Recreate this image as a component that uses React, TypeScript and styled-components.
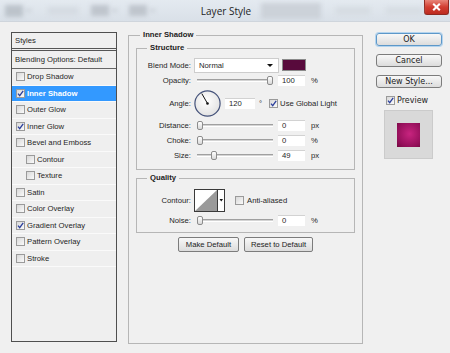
import styled, { createGlobalStyle } from 'styled-components'

const GlobalStyle = createGlobalStyle`
  html, body {
    margin: 0;
    padding: 0;
    background: #f0f0f0;
  }
  #root {
    width: 450px;
    height: 353px;
    overflow: hidden;
  }
`

const Window = styled.div`
  width: 450px;
  height: 353px;
  display: flex;
  flex-direction: column;
  background: #f0f0f0;
  font-family: "Liberation Sans", Arial, sans-serif;
  font-size: 7.7px;
  color: #262626;
`

const TitleBar = styled.div`
  flex: none;
  height: 22px;
  display: grid;
  box-sizing: border-box;
  background: linear-gradient(#e4eaf0, #d9e0e8);
  border-bottom: 1px solid #cfd5dc;
  overflow: hidden;
`

const Ghost = styled.div`
  grid-area: 1 / 1;
  display: flex;
  align-items: center;
  padding-left: 5px;
  filter: blur(2.2px);
`

const Blob = styled.div<{ $w: number; $h: number; $ml: number; $c: string }>`
  flex: none;
  width: ${({ $w }) => $w}px;
  height: ${({ $h }) => $h}px;
  margin-left: ${({ $ml }) => $ml}px;
  background: ${({ $c }) => $c};
`

const Title = styled.div`
  grid-area: 1 / 1;
  justify-self: center;
  align-self: center;
  margin-left: 2px;
  font-family: "Open Sans", "Liberation Sans", sans-serif;
  font-size: 10px;
  color: #1e1e1e;
`

const Close = styled.div`
  grid-area: 1 / 1;
  justify-self: end;
  align-self: start;
  width: 25px;
  height: 15px;
  margin-right: 1px;
  box-sizing: border-box;
  display: flex;
  align-items: center;
  justify-content: center;
  background: linear-gradient(#e8867a, #d23e31 50%, #bd2b20);
  border: 1px solid #8f2a22;
  border-top: none;
  border-radius: 0 0 3px 3px;
`

const Body = styled.div`
  flex: 1;
  display: flex;
  align-items: flex-start;
  padding-top: 8px;
`

const StylesList = styled.div`
  flex: none;
  margin: 2px 0 0 11px;
  width: 106px;
  height: 310px;
  box-sizing: border-box;
  border: 1px solid #4f4f4f;
  background: #efefef;
  display: flex;
  flex-direction: column;
`

const ListHeader = styled.div<{ $h: number; $double?: boolean }>`
  height: ${({ $h }) => $h}px;
  display: flex;
  align-items: center;
  padding-left: 3px;
  border-bottom: ${({ $double }) => ($double ? '3px double #555' : '1px solid #666')};
`

const ListItem = styled.div<{ $indent?: boolean; $selected?: boolean }>`
  height: 16.5px;
  box-sizing: border-box;
  display: flex;
  align-items: center;
  gap: 2px;
  padding-left: ${({ $indent }) => ($indent ? 14 : 4)}px;
  border-bottom: 1px solid #fafafa;
  background: ${({ $selected }) => ($selected ? '#3399ff' : 'transparent')};
  color: ${({ $selected }) => ($selected ? '#fff' : '#262626')};
  font-weight: ${({ $selected }) => ($selected ? 'bold' : 'normal')};
`

const Box = styled.span<{ $ml?: number }>`
  flex: none;
  width: 9px;
  height: 9px;
  margin-left: ${({ $ml }) => $ml ?? 0}px;
  box-sizing: border-box;
  border: 1px solid #9a9a9a;
  background: linear-gradient(135deg, #d8d8d8, #fafafa);
  display: inline-flex;
  align-items: center;
  justify-content: center;
`

const CheckBox = ({ on, ml }: { on?: boolean; ml?: number }) => (
  <Box $ml={ml}>
    {on && (
      <svg width="7" height="7" viewBox="0 0 7 7">
        <path d="M1 3.6 L2.7 5.6 L6.2 0.8" stroke="#2b3f9c" strokeWidth="1.3" fill="none" />
      </svg>
    )}
  </Box>
)

const Group = styled.fieldset<{ $pad: string; $mt?: number; $h?: number; $w?: number; $ml?: number }>`
  flex: none;
  margin: ${({ $mt }) => $mt ?? 0}px 0 0 ${({ $ml }) => $ml ?? 0}px;
  padding: ${({ $pad }) => $pad};
  border: 1px solid #b6b6b6;
  min-width: 0;
  box-sizing: border-box;
  ${({ $h }) => ($h ? `height: ${$h}px;` : '')}
  ${({ $w }) => ($w ? `width: ${$w}px;` : '')}
`

const Legend = styled.legend<{ $ml: number }>`
  margin-left: ${({ $ml }) => $ml}px;
  padding: 0 3px;
  line-height: 10px;
  font-size: 7.7px;
  font-weight: bold;
  color: #222;
`

const Row = styled.div<{ $h: number; $mt?: number }>`
  display: flex;
  align-items: center;
  height: ${({ $h }) => $h}px;
  margin-top: ${({ $mt }) => $mt ?? 0}px;
`

const Label = styled.span`
  flex: none;
  width: 54px;
  margin-right: 3px;
  text-align: right;
`

const Select = styled.div`
  flex: none;
  width: 85px;
  height: 15px;
  box-sizing: border-box;
  display: flex;
  align-items: center;
  justify-content: space-between;
  padding: 0 5px 0 4px;
  background: #fff;
  border: 1px solid #cdcdcd;
`

const Caret = styled.span`
  width: 0;
  height: 0;
  border-left: 3px solid transparent;
  border-right: 3px solid transparent;
  border-top: 3px solid #111;
`

const Swatch = styled.div`
  flex: none;
  width: 24px;
  height: 12px;
  margin-left: 3px;
  box-sizing: border-box;
  background: #580a3c;
  border: 1px solid #8a8a8a;
`

const SliderWrap = styled.div`
  flex: none;
  position: relative;
  width: 76px;
  height: 11px;
  margin-left: 3px;
  display: flex;
  align-items: center;
`

const Track = styled.div`
  width: 100%;
  height: 3px;
  box-sizing: border-box;
  background: #d4d4d4;
  border-top: 1px solid #a0a0a0;
  border-bottom: 1px solid #fff;
`

const Thumb = styled.div`
  position: absolute;
  top: 1px;
  width: 6px;
  height: 9px;
  box-sizing: border-box;
  border: 1px solid #8c8c8c;
  border-radius: 2px;
  background: linear-gradient(#fff, #d8d8d8);
`

const Slider = ({ value, max }: { value: number; max: number }) => (
  <SliderWrap>
    <Track />
    <Thumb style={{ left: Math.round((value / max) * 70) }} />
  </SliderWrap>
)

const Field = styled.div<{ $w: number; $ml: number }>`
  flex: none;
  width: ${({ $w }) => $w}px;
  height: 11px;
  margin-left: ${({ $ml }) => $ml}px;
  box-sizing: border-box;
  padding-left: 4px;
  line-height: 10px;
  background: #fff;
  border-top: 1px solid #d2d2d2;
`

const Unit = styled.span<{ $ml: number }>`
  margin-left: ${({ $ml }) => $ml}px;
`

const Dial = () => (
  <svg width="27" height="27" viewBox="0 0 27 27" style={{ flex: 'none' }}>
    <defs>
      <radialGradient id="dialFill" cx="0.45" cy="0.4" r="0.6">
        <stop offset="0" stopColor="#ffffff" />
        <stop offset="1" stopColor="#e2e2e2" />
      </radialGradient>
    </defs>
    <circle cx="13.5" cy="13.5" r="12.6" fill="url(#dialFill)" stroke="#44527a" strokeWidth="1.2" />
    <line x1="13.5" y1="13.5" x2="7.8" y2="3.6" stroke="#111" strokeWidth="1" />
    <circle cx="13.5" cy="13.5" r="1.3" fill="#111" />
  </svg>
)

const Contour = () => (
  <svg width="31" height="23" viewBox="0 0 31 23" style={{ flex: 'none' }}>
    <rect x="0.5" y="0.5" width="30" height="22" fill="#fff" stroke="#3a3a3a" />
    <polygon points="1,22 23,1 23,22" fill="#9a9a9a" />
    <line x1="23.5" y1="0.5" x2="23.5" y2="22.5" stroke="#3a3a3a" />
    <polygon points="25.5,10 29,10 27.25,12.5" fill="#111" />
  </svg>
)

const ButtonRow = styled.div`
  display: flex;
  justify-content: center;
  gap: 5px;
  margin-top: 4px;
`

const PushButton = styled.button<{ $w: number; $h: number; $primary?: boolean }>`
  flex: none;
  width: ${({ $w }) => $w}px;
  height: ${({ $h }) => $h}px;
  padding: 0;
  box-sizing: border-box;
  border: 1px solid ${({ $primary }) => ($primary ? '#5d98c9' : '#7c7c7c')};
  box-shadow: ${({ $primary }) => ($primary ? '0 0 0 1px #b4d4ee' : 'none')};
  border-radius: 2px;
  background: linear-gradient(#f8f8f8, #dcdcdc);
  font-family: inherit;
  font-size: 7.7px;
  color: #222;
  line-height: 1;
`

const Side = styled.div`
  flex: none;
  width: 66px;
  margin: 3px 0 0 13px;
  display: flex;
  flex-direction: column;
  gap: 8px;
  font-family: "DejaVu Sans", Verdana, sans-serif;
`

const SideButton = styled(PushButton)`
  border-radius: 3px;
  font-family: "DejaVu Sans", Verdana, sans-serif;
  font-size: 8px;
`

const PreviewRow = styled.div`
  height: 10px;
  margin-top: -1px;
  padding-left: 10px;
  display: flex;
  align-items: center;
  gap: 2px;
  font-size: 8px;
`

const PreviewBox = styled.div`
  width: 49px;
  height: 49px;
  margin: -3px 0 0 8px;
  box-sizing: border-box;
  display: flex;
  align-items: center;
  justify-content: center;
  background: #d9d9d9;
  border: 1px solid #cbcbcb;
`

const PreviewSwatch = styled.div`
  width: 23px;
  height: 24px;
  background: radial-gradient(circle at 55% 45%, #c8247f, #940f5a 70%, #72083f);
`

const styleItems: { name: string; on?: boolean; indent?: boolean; selected?: boolean }[] = [
  { name: 'Drop Shadow' },
  { name: 'Inner Shadow', on: true, selected: true },
  { name: 'Outer Glow' },
  { name: 'Inner Glow', on: true },
  { name: 'Bevel and Emboss' },
  { name: 'Contour', indent: true },
  { name: 'Texture', indent: true },
  { name: 'Satin' },
  { name: 'Color Overlay' },
  { name: 'Gradient Overlay', on: true },
  { name: 'Pattern Overlay' },
  { name: 'Stroke' },
]

const SliderRow = ({ label, value, max, unit, h, mt }: { label: string; value: number; max: number; unit: string; h: number; mt?: number }) => (
  <Row $h={h} $mt={mt}>
    <Label>{label}</Label>
    <Slider value={value} max={max} />
    <Field $w={27} $ml={5}>{value}</Field>
    <Unit $ml={6}>{unit}</Unit>
  </Row>
)

export default function App() {
  return (
    <Window>
      <GlobalStyle />
      <TitleBar>
        <Ghost>
          <Blob $w={18} $h={12} $ml={0} $c="#bcc3cb" />
          <Blob $w={5} $h={3} $ml={3} $c="#c8ced5" />
          <Blob $w={30} $h={8} $ml={17} $c="#d5dbe2" />
          <Blob $w={18} $h={11} $ml={13} $c="#bfc5cd" />
          <Blob $w={5} $h={3} $ml={3} $c="#c8ced5" />
          <Blob $w={18} $h={11} $ml={12} $c="#bfc5cd" />
          <Blob $w={5} $h={3} $ml={3} $c="#c8ced5" />
          <Blob $w={60} $h={16} $ml={106} $c="#ccd2d9" />
          <Blob $w={34} $h={8} $ml={15} $c="#d6dce2" />
          <Blob $w={36} $h={8} $ml={16} $c="#d7dde3" />
        </Ghost>
        <Title>Layer Style</Title>
        <Close>
          <svg width="9" height="8" viewBox="0 0 9 8">
            <path d="M1.2 0.8 L7.8 7.2 M7.8 0.8 L1.2 7.2" stroke="#fff" strokeWidth="2.1" />
          </svg>
        </Close>
      </TitleBar>

      <Body>
        <StylesList>
          <ListHeader $h={15} $double>Styles</ListHeader>
          <ListHeader $h={17}>Blending Options: Default</ListHeader>
          {styleItems.map((item) => (
            <ListItem key={item.name} $indent={item.indent} $selected={item.selected}>
              <CheckBox on={item.on} />
              <span>{item.name}</span>
            </ListItem>
          ))}
        </StylesList>

        <Group $pad="3px 7px 0 7px" $w={235} $h={314} $ml={11}>
          <Legend $ml={4}>Inner Shadow</Legend>

          <Group $pad="4px 0 7px 0">
            <Legend $ml={10}>Structure</Legend>
            <Row $h={16}>
              <Label>Blend Mode:</Label>
              <Select>
                <span>Normal</span>
                <Caret />
              </Select>
              <Swatch />
            </Row>
            <SliderRow label="Opacity:" value={100} max={100} unit="%" h={15} />
            <Row $h={30}>
              <Label>Angle:</Label>
              <Dial />
              <Field $w={30} $ml={4}>120</Field>
              <Unit $ml={4}>°</Unit>
              <CheckBox on ml={7} />
              <Unit $ml={2}>Use Global Light</Unit>
            </Row>
            <SliderRow label="Distance:" value={0} max={100} unit="px" h={15} />
            <SliderRow label="Choke:" value={0} max={100} unit="%" h={15} />
            <SliderRow label="Size:" value={49} max={250} unit="px" h={14} />
          </Group>

          <Group $pad="6px 0 6px 0" $mt={3}>
            <Legend $ml={10}>Quality</Legend>
            <Row $h={23}>
              <Label>Contour:</Label>
              <Contour />
              <CheckBox ml={10} />
              <Unit $ml={3}>Anti-aliased</Unit>
            </Row>
            <SliderRow label="Noise:" value={0} max={100} unit="%" h={11} mt={3} />
          </Group>

          <ButtonRow>
            <PushButton $w={61} $h={15}>Make Default</PushButton>
            <PushButton $w={69} $h={15}>Reset to Default</PushButton>
          </ButtonRow>
        </Group>

        <Side>
          <SideButton $w={66} $h={13} $primary>OK</SideButton>
          <SideButton $w={66} $h={13}>Cancel</SideButton>
          <SideButton $w={66} $h={13}>New Style...</SideButton>
          <PreviewRow>
            <CheckBox on />
            <span>Preview</span>
          </PreviewRow>
          <PreviewBox>
            <PreviewSwatch />
          </PreviewBox>
        </Side>
      </Body>
    </Window>
  )
}
